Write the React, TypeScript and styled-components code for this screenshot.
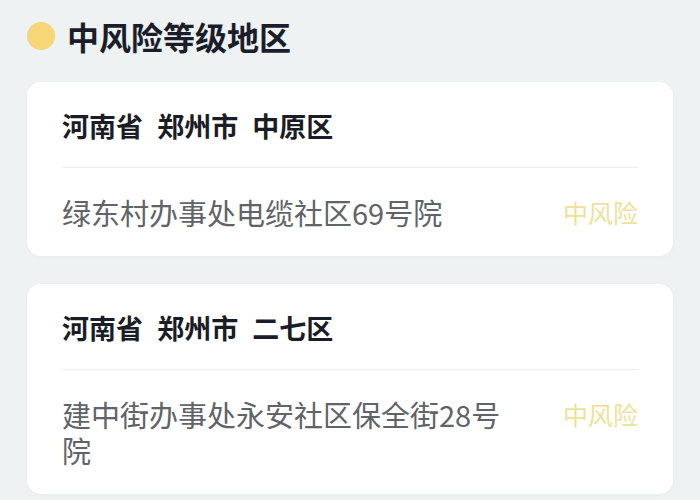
import React from 'react';
import styled, { createGlobalStyle } from 'styled-components';

const GlobalStyle = createGlobalStyle`
  html, body {
    margin: 0;
    padding: 0;
    background: #eef2f3;
  }
  body {
    font-family: "Noto Sans CJK SC", "Noto Sans", sans-serif;
  }
`;

const Page = styled.div`
  width: 700px;
  height: 500px;
  overflow: hidden;
  padding: 14px 27px 0;
  box-sizing: border-box;
`;

const Header = styled.div`
  display: flex;
  align-items: center;
  gap: 12px;
  height: 44px;
  margin-bottom: 24px;
`;

const Dot = styled.span<{ $color: string }>`
  width: 28px;
  height: 28px;
  border-radius: 50%;
  background: ${({ $color }) => $color};
  flex-shrink: 0;
`;

const HeaderTitle = styled.h2`
  margin: 0;
  font-size: 32px;
  line-height: 44px;
  font-weight: 700;
  color: #1b1e2a;
`;

const CardList = styled.div`
  display: flex;
  flex-direction: column;
  gap: 28px;
`;

const Card = styled.div`
  background: #fff;
  border-radius: 14px;
  padding: 24px 35px 26px;
  box-shadow: 0 1px 4px rgba(0, 0, 0, 0.03);
`;

const CardTitle = styled.div`
  font-size: 27px;
  line-height: 40px;
  font-weight: 700;
  color: #1a1d26;
  word-spacing: 8px;
  padding-bottom: 21px;
  border-bottom: 1px solid #eceef0;
`;

const Row = styled.div`
  display: flex;
  justify-content: space-between;
  align-items: flex-start;
  padding-top: 26px;
`;

const Address = styled.div`
  max-width: 452px;
  font-size: 29px;
  line-height: 36px;
  color: #606368;
`;

const Level = styled.span<{ $color: string }>`
  font-size: 25px;
  line-height: 36px;
  color: ${({ $color }) => $color};
  white-space: nowrap;
`;

const areas = [
  { region: '河南省 郑州市 中原区', address: '绿东村办事处电缆社区69号院' },
  { region: '河南省 郑州市 二七区', address: '建中街办事处永安社区保全街28号院' },
];

export default function App() {
  return (
    <>
      <GlobalStyle />
      <Page>
        <Header>
          <Dot $color="#f6d676" />
          <HeaderTitle>中风险等级地区</HeaderTitle>
        </Header>
        <CardList>
          {areas.map((a) => (
            <Card key={a.address}>
              <CardTitle>{a.region}</CardTitle>
              <Row>
                <Address>{a.address}</Address>
                <Level $color="#ece29a">中风险</Level>
              </Row>
            </Card>
          ))}
        </CardList>
      </Page>
    </>
  );
}
